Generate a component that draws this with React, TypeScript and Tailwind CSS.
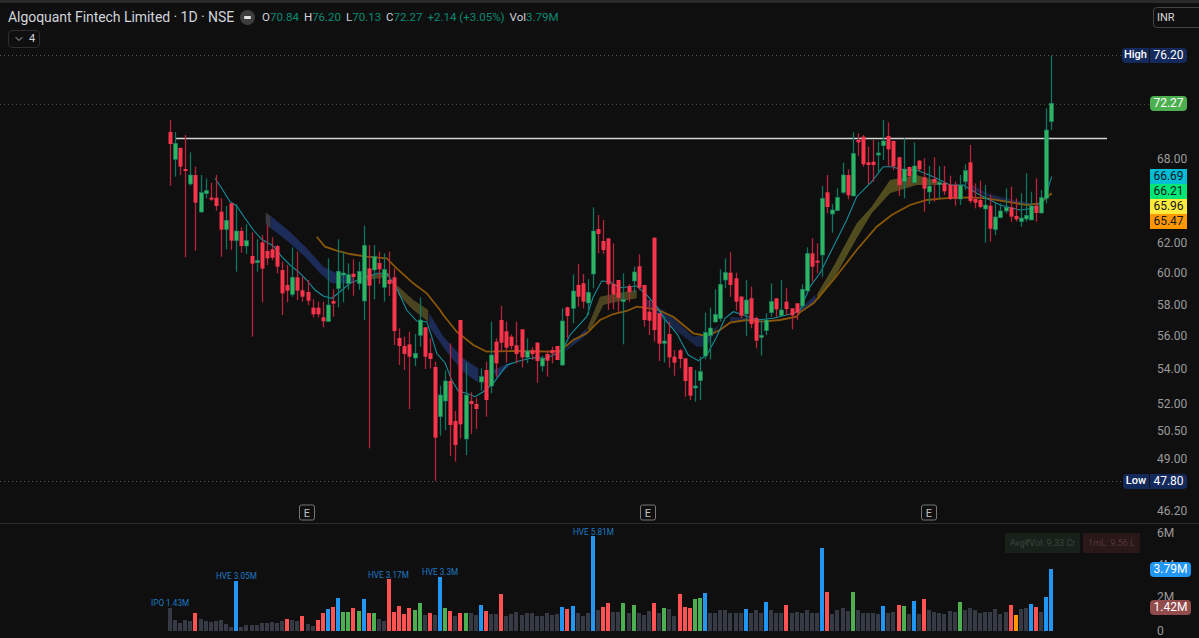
import { ChevronDown } from 'lucide-react';

type Candle = [number, number, number, number, 'r' | 'g'];

// candle rows: wick top, wick bottom, body top, body bottom (read at 3x, y offset per block)
const BLOCK_A: Candle[] = [
  [0, 197, 36, 72, 'r'], [36, 170, 70, 118, 'g'], [82, 165, 84, 140, 'r'], [45, 412, 147, 153, 'r'],
  [97, 197, 165, 192, 'g'], [140, 392, 165, 248, 'r'], [165, 278, 218, 276, 'g'], [175, 235, 212, 221, 'g'],
  [188, 242, 233, 238, 'r'], [165, 272, 233, 258, 'r'], [235, 410, 275, 329, 'r'], [258, 388, 301, 329, 'g'],
  [250, 390, 250, 362, 'r'], [252, 455, 333, 362, 'g'], [322, 398, 333, 378, 'r'], [313, 402, 362, 378, 'g'],
  [337, 650, 408, 431, 'r'], [358, 455, 422, 428, 'g'], [345, 547, 367, 446, 'r'], [316, 435, 393, 415, 'r'],
  [352, 420, 388, 413, 'r'], [375, 460, 378, 440, 'r'], [425, 585, 450, 520, 'r'], [435, 547, 495, 512, 'r'],
  [382, 530, 472, 523, 'g'], [395, 540, 472, 512, 'r'], [470, 545, 511, 530, 'r'], [480, 555, 516, 542, 'r'],
  [538, 593, 563, 583, 'r'], [545, 592, 563, 583, 'r'], [545, 622, 592, 604, 'r'], [415, 605, 555, 605, 'g'],
  [508, 590, 543, 551, 'r'], [358, 562, 454, 506, 'g'], [395, 547, 459, 465, 'g'], [430, 510, 464, 491, 'g'],
  [418, 527, 461, 471, 'r'], [425, 510, 454, 491, 'g'], [317, 600, 376, 543, 'g'],
];

const BLOCK_B: Candle[] = [
  [45, 655, 115, 167, 'r'], [45, 208, 80, 120, 'g'], [65, 162, 99, 118, 'r'], [70, 215, 118, 172, 'g'],
  [65, 198, 150, 162, 'r'], [115, 345, 142, 303, 'r'], [295, 405, 324, 348, 'r'], [320, 420, 348, 372, 'r'],
  [305, 537, 343, 380, 'r'], [312, 408, 370, 384, 'g'], [202, 350, 270, 316, 'g'], [292, 417, 292, 380, 'r'],
  [325, 415, 369, 387, 'r'], [395, 752, 411, 623, 'r'], [467, 617, 495, 560, 'g'], [422, 600, 453, 513, 'g'],
  [340, 678, 453, 585, 'r'], [543, 695, 573, 645, 'r'], [270, 625, 270, 583, 'r'], [398, 675, 495, 627, 'g'],
  [487, 612, 513, 522, 'r'], [503, 597, 522, 537, 'r'], [415, 482, 440, 456, 'g'], [395, 560, 420, 510, 'r'],
  [275, 490, 375, 468, 'g'], [325, 440, 335, 400, 'r'], [228, 365, 270, 338, 'r'], [275, 398, 304, 353, 'r'],
  [313, 358, 320, 348, 'r'], [275, 400, 346, 372, 'r'], [297, 412, 298, 382, 'r'], [325, 400, 363, 382, 'g'],
  [352, 390, 360, 372, 'r'], [337, 458, 338, 393, 'r'], [378, 425, 385, 408, 'g'], [360, 440, 372, 392, 'r'],
  [350, 400, 360, 370, 'r'], [348, 390, 348, 390, 'r'], [235, 408, 273, 405, 'g'],
];

const BLOCK_C: Candle[] = [
  [320, 415, 322, 348, 'r'], [223, 370, 273, 325, 'g'], [192, 320, 255, 290, 'r'], [222, 325, 250, 305, 'r'],
  [238, 345, 277, 309, 'g'], [22, 265, 93, 222, 'g'], [45, 160, 87, 102, 'r'], [60, 162, 123, 150, 'r'],
  [115, 330, 115, 253, 'r'], [130, 328, 252, 283, 'r'], [240, 335, 240, 293, 'r'], [220, 433, 299, 304, 'g'],
  [252, 305, 258, 276, 'r'], [200, 278, 216, 243, 'g'], [163, 270, 199, 263, 'r'], [255, 380, 255, 360, 'r'],
  [300, 405, 335, 362, 'r'], [113, 425, 113, 390, 'r'], [340, 483, 340, 431, 'r'], [350, 488, 423, 430, 'g'],
  [365, 503, 402, 472, 'r'], [450, 527, 470, 488, 'r'], [447, 505, 451, 477, 'r'], [475, 590, 475, 543, 'r'],
  [500, 600, 501, 587, 'r'], [510, 605, 558, 563, 'g'], [470, 600, 515, 542, 'g'], [338, 478, 397, 468, 'g'],
  [323, 478, 384, 406, 'g'], [268, 367, 343, 366, 'g'], [208, 365, 253, 356, 'g'], [175, 265, 218, 240, 'g'],
  [157, 290, 218, 255, 'r'], [218, 332, 235, 305, 'r'], [288, 355, 290, 347, 'r'], [240, 408, 300, 342, 'g'],
  [260, 385, 295, 372, 'r'], [350, 445, 354, 422, 'r'], [360, 467, 406, 411, 'g'], [340, 405, 360, 392, 'g'],
  [250, 350, 305, 338, 'g'], [295, 350, 295, 328, 'r'], [240, 350, 330, 347, 'g'], [265, 345, 305, 327, 'r'],
  [325, 388, 325, 346, 'r'], [310, 360, 310, 338, 'r'], [253, 325, 268, 318, 'g'],
];

const BLOCK_D: Candle[] = [
  [412, 540, 430, 543, 'g'], [385, 515, 430, 470, 'r'], [400, 490, 452, 456, 'r'], [228, 500, 265, 435, 'g'],
  [195, 310, 247, 291, 'r'], [282, 368, 300, 312, 'g'], [235, 302, 262, 302, 'g'], [158, 252, 195, 247, 'g'],
  [178, 268, 195, 256, 'r'], [67, 258, 130, 258, 'g'], [70, 137, 90, 97, 'r'], [75, 170, 80, 163, 'r'],
  [110, 222, 157, 165, 'r'], [90, 215, 155, 165, 'r'], [95, 187, 129, 131, 'g'], [30, 150, 93, 107, 'g'],
  [37, 170, 78, 118, 'r'], [92, 180, 93, 169, 'r'], [140, 258, 142, 225, 'r'], [85, 265, 177, 215, 'g'],
  [170, 225, 171, 198, 'r'], [97, 220, 168, 218, 'g'], [150, 185, 152, 178, 'r'], [145, 305, 202, 236, 'r'],
  [168, 282, 228, 246, 'g'], [142, 275, 207, 218, 'r'], [168, 265, 218, 222, 'g'], [168, 255, 219, 244, 'r'],
  [197, 270, 224, 267, 'r'], [215, 287, 225, 265, 'r'], [195, 285, 226, 267, 'g'], [163, 240, 182, 215, 'g'],
  [105, 280, 157, 273, 'r'], [220, 295, 267, 278, 'r'], [212, 295, 270, 291, 'r'], [225, 398, 285, 297, 'g'],
  [255, 395, 287, 356, 'r'], [280, 375, 321, 359, 'g'], [280, 325, 303, 323, 'g'], [235, 310, 292, 303, 'g'],
  [230, 335, 292, 320, 'r'], [265, 335, 318, 328, 'r'], [250, 350, 324, 335, 'g'], [190, 335, 316, 327, 'g'],
  [245, 330, 288, 330, 'g'], [205, 335, 287, 309, 'r'], [240, 310, 263, 309, 'g'],
];

const BLOCK_E: Candle[] = [
  [325, 610, 390, 595, 'g'], [167, 390, 310, 365, 'g'],
];

const toY = (rows: Candle[], top: number): Candle[] =>
  rows.map(([a, b, c, d, s]) => [top + a / 3, top + b / 3, top + c / 3, top + d / 3, s]);

const CANDLES = [
  ...toY(BLOCK_A, 120),
  ...toY(BLOCK_B, 230),
  ...toY(BLOCK_C, 200),
  ...toY(BLOCK_D, 110),
  ...toY(BLOCK_E, 0),
];

const barX = (i: number) => Math.round(170 + i * 5.095);

const pts = (ox: number, oy: number, list: number[][]) =>
  list.map(([x, y]) => `${(ox + x / 3).toFixed(1)},${(oy + y / 3).toFixed(1)}`).join(' ');

const CYAN = [
  pts(150, 120, [[195,175],[215,205],[240,245],[260,258],[285,295],[310,330],[335,358],[370,378],[395,410],[420,435],[445,455],[470,480],[495,510],[520,528],[545,535],[570,515],[600,490],[625,480],[650,470],[680,460],[710,460],[740,505],[770,570],[800,603],[830,605],[845,650]]),
  pts(350, 230, [[260,370],[285,398],[305,450],[325,483],[350,490],[375,500],[400,485],[430,460],[470,405],[510,392],[550,383],[590,385],[637,362]]),
  pts(560, 200, [[10,445],[30,405],[80,350],[100,290],[125,243],[150,245],[180,263],[230,258],[260,285],[290,320],[320,365],[350,400],[385,465],[415,482],[440,465],[470,410],[495,355],[520,335],[550,345],[590,360],[640,355],[700,340]]),
  pts(800, 110, [[0,600],[30,530],[60,490],[100,410],[140,330],[170,260],[215,215],[250,170],[275,170],[310,180],[350,180],[400,200],[450,225],[490,225],[530,250],[570,270],[600,285],[660,300],[700,295],[735,265],[755,200]]),
].join(' ');

const ORANGE = [
  pts(150, 120, [[500,350],[525,380],[560,392],[600,402],[650,410],[710,415],[740,445],[790,490],[830,520],[870,570]]),
  pts(350, 230, [[280,255],[320,305],[370,345],[410,365],[500,363],[600,365],[637,362]]),
  pts(560, 200, [[10,445],[40,420],[80,400],[120,360],[160,342],[200,333],[230,320],[290,328],[340,350],[400,400],[440,408],[480,390],[510,368],[560,360],[600,365],[660,360],[710,350]]),
  pts(800, 110, [[0,607],[40,580],[100,510],[170,420],[230,350],[275,315],[330,285],[380,270],[430,265],[510,262],[560,265],[620,275],[680,285],[720,280],[755,250]]),
].join(' ');

const RIBBONS = [
  { fill: '#3a3a40', p: pts(150, 120, [[347,278],[362,288],[362,325],[347,312]]) },
  { fill: '#1c2b57', p: pts(150, 120, [[362,288],[420,335],[470,385],[520,440],[560,460],[610,470],[610,490],[545,490],[510,460],[465,410],[415,365],[362,325]]) },
  { fill: '#4a4520', p: pts(150, 120, [[650,465],[720,458],[720,470],[650,480]]) },
  { fill: '#4a4520', p: pts(350, 230, [[140,165],[190,210],[235,240],[235,275],[190,240],[145,195]]) },
  { fill: '#1c2b57', p: pts(350, 230, [[238,250],[280,320],[340,385],[385,415],[385,458],[340,425],[290,365],[238,290]]) },
  { fill: '#1c2b57', p: pts(350, 230, [[430,420],[490,395],[440,445]]) },
  { fill: '#1c2b57', p: pts(350, 230, [[640,365],[710,295],[710,315],[650,360]]) },
  { fill: '#4a4520', p: pts(350, 230, [[712,295],[750,200],[800,190],[860,180],[860,205],[800,215],[760,225],[720,305]]) },
  { fill: '#1a2648', p: pts(560, 200, [[250,290],[330,345],[400,410],[450,400],[480,370],[440,440],[410,440],[340,385],[250,310]]) },
  { fill: '#1a2648', p: pts(560, 200, [[510,350],[600,358],[600,364],[510,365]]) },
  { fill: '#1c2b57', p: pts(560, 200, [[720,330],[765,285],[770,305],[720,340]]) },
  { fill: '#504c1e', p: pts(800, 110, [[50,555],[100,470],[170,340],[215,290],[270,210],[350,195],[420,215],[430,225],[350,225],[270,250],[215,310],[170,385],[100,510],[55,570]]) },
  { fill: '#1a2648', p: pts(800, 110, [[490,210],[560,250],[640,270],[700,280],[700,285],[600,275],[520,240]]) },
];

const COLORS: Record<string, string> = {
  x: '#363a45',
  r: '#ff5252',
  g: '#4caf50',
  b: '#2196f3',
  o: '#ff9800',
};

// volume bar tops (y at 3x from 525), then colour key
const VOLUME: [number, string][] = [
  [248,'x'],[284,'x'],[294,'x'],[284,'x'],[288,'x'],[265,'r'],[281,'x'],[288,'x'],[292,'x'],[288,'x'],[286,'x'],[297,'x'],[305,'x'],[168,'b'],[305,'x'],[300,'x'],[300,'x'],[300,'x'],[294,'x'],[294,'x'],
  [291,'x'],[294,'x'],[287,'x'],[281,'r'],[284,'x'],[288,'x'],[273,'r'],[297,'x'],[303,'x'],[284,'r'],[265,'r'],[252,'b'],[247,'r'],[218,'b'],[260,'g'],[262,'g'],[250,'r'],[257,'g'],[223,'b'],[265,'r'],
  [265,'g'],[282,'x'],[288,'x'],[162,'r'],[262,'r'],[244,'r'],[267,'r'],[250,'r'],[254,'g'],[234,'g'],[270,'x'],[265,'r'],[270,'x'],[156,'b'],[250,'g'],[257,'r'],[273,'x'],[265,'r'],[265,'g'],[265,'x'],
  [270,'x'],[240,'b'],[258,'r'],[267,'x'],[267,'x'],[207,'r'],[273,'x'],[267,'x'],[260,'x'],[270,'x'],[263,'x'],[263,'x'],[273,'x'],[273,'x'],[265,'x'],[270,'x'],[267,'x'],[247,'b'],[252,'r'],[244,'b'],
  [263,'x'],[273,'x'],[263,'x'],[33,'b'],[255,'x'],[247,'r'],[234,'r'],[261,'x'],[261,'x'],[234,'g'],[265,'x'],[241,'g'],[265,'x'],[270,'x'],[258,'x'],[234,'r'],[265,'x'],[250,'g'],[252,'x'],[273,'x'],
  [207,'r'],[247,'r'],[250,'r'],[223,'g'],[220,'g'],[203,'b'],[265,'x'],[265,'x'],[255,'x'],[255,'x'],[263,'x'],[265,'x'],[265,'x'],[252,'b'],[265,'x'],[255,'x'],[265,'x'],[232,'b'],[255,'x'],[263,'x'],
  [265,'x'],[240,'r'],[265,'x'],[260,'x'],[265,'x'],[255,'x'],[265,'x'],[265,'x'],[70,'b'],[200,'r'],[267,'x'],[255,'x'],[250,'x'],[258,'x'],[200,'g'],[255,'x'],[265,'x'],[265,'x'],[265,'x'],[267,'x'],
  [242,'b'],[265,'x'],[261,'x'],[240,'r'],[244,'g'],[267,'x'],[229,'b'],[267,'x'],[221,'r'],[255,'x'],[260,'x'],[265,'x'],[267,'x'],[258,'x'],[260,'x'],[232,'g'],[255,'x'],[250,'x'],[255,'x'],[265,'x'],
  [262,'x'],[262,'x'],[252,'x'],[267,'x'],[261,'x'],[240,'r'],[270,'o'],[252,'x'],[250,'x'],[238,'b'],[247,'r'],[261,'x'],[216,'b'],[132,'b'],
];

const PRICE_LABELS = [
  { y: 159, t: '68.00' }, { y: 243, t: '62.00' }, { y: 273, t: '60.00' }, { y: 305, t: '58.00' },
  { y: 336, t: '56.00' }, { y: 369, t: '54.00' }, { y: 404, t: '52.00' }, { y: 431, t: '50.50' },
  { y: 459, t: '49.00' }, { y: 511, t: '46.20' },
];

const EMA_TAGS = [
  { y: 169, t: '66.69', c: 'bg-[#00bcd4]' },
  { y: 184, t: '66.21', c: 'bg-[#00e676]' },
  { y: 199, t: '65.96', c: 'bg-[#ffeb3b]' },
  { y: 214, t: '65.47', c: 'bg-[#ff9800]' },
];

const VOLUME_NOTES = [
  { x: 151, y: 606, t: 'IPO 1.43M' },
  { x: 216, y: 579, t: 'HVE 3.05M' },
  { x: 368, y: 578, t: 'HVE 3.17M' },
  { x: 422, y: 575, t: 'HVE 3.3M' },
  { x: 573, y: 535, t: 'HVE 5.81M' },
];

const OHLC = [
  ['O', '70.84'],
  ['H', '76.20'],
  ['L', '70.13'],
  ['C', '72.27'],
];

function PriceChart() {
  return (
    <svg className="absolute inset-0 w-[1150px] h-[520px]" viewBox="0 3 1150 520">
      <line x1="0" x2="1122" y1="55.5" y2="55.5" stroke="#5a5a5a" strokeDasharray="1 3" />
      <line x1="0" x2="1150" y1="104.5" y2="104.5" stroke="#3e5a3e" strokeDasharray="1 3" />
      <line x1="0" x2="1122" y1="481.5" y2="481.5" stroke="#5a5a5a" strokeDasharray="1 3" />

      {RIBBONS.map((r, i) => (
        <polygon key={i} points={r.p} fill={r.fill} />
      ))}
      <polyline points={ORANGE} fill="none" stroke="#8a5608" strokeWidth="1.8" />
      <polyline points={CYAN} fill="none" stroke="#148f9e" strokeWidth="1.1" />
      <line x1="175" x2="1107" y1="138.5" y2="138.5" stroke="#d4d4d4" strokeWidth="1.4" />

      {CANDLES.map(([wickTop, wickBot, top, bot, side], i) => {
        const x = barX(i);
        const up = side === 'g';
        return (
          <g key={i}>
            <rect x={x - 0.15} y={wickTop} width="1.3" height={wickBot - wickTop} fill={up ? '#0d7560' : '#b8243c'} />
            <rect
              x={x - 1.5}
              y={top}
              width="4"
              height={Math.max(bot - top, 2)}
              fill={up ? '#2fb460' : '#fa344b'}
              stroke={up ? '#12806a' : 'none'}
              strokeWidth="0.6"
            />
          </g>
        );
      })}

      {[307, 648, 929].map((x) => (
        <g key={x}>
          <rect x={x - 7.5} y="505" width="15" height="15" rx="2" fill="#0f0f0f" stroke="#777777" />
          <text x={x} y="516.5" textAnchor="middle" fontSize="11" fill="#c0c0c0">
            E
          </text>
        </g>
      ))}
    </svg>
  );
}

function VolumeChart() {
  return (
    <svg className="absolute inset-0 w-[1150px] h-[114px]" viewBox="0 524 1150 114">
      <g shapeRendering="crispEdges">
        {VOLUME.map(([top, key], i) => {
          const y = 525 + top / 3;
          return <rect key={i} x={barX(i) - 2} y={y} width="4" height={631 - y} fill={COLORS[key]} />;
        })}
      </g>
      {VOLUME_NOTES.map((n) => (
        <text key={n.t} x={n.x} y={n.y} fontSize="8.2" fill="#1e7ac4">
          {n.t}
        </text>
      ))}
    </svg>
  );
}

export default function App() {
  return (
    <div className="w-[1199px] h-[638px] flex flex-col overflow-hidden bg-[#0f0f0f] font-['Roboto',sans-serif] text-[#d1d4dc]">
      <div className="h-[3px] bg-[#2a2a2a]" />

      {/* Price pane */}
      <div className="h-[520px] flex">
        <div className="relative w-[1150px]">
          <PriceChart />

          {/* Legend */}
          <div className="absolute left-2 top-[6px] flex flex-col items-start gap-[5px]">
            <div className="flex items-center h-4">
              <span className="text-[14px] leading-4 tracking-[-0.05px]">Algoquant Fintech Limited · 1D · NSE</span>
              <span className="ml-[6px] flex items-center justify-center w-[15px] h-[15px] rounded-full bg-[#3d3d3d]">
                <span className="w-[7px] h-[3px] rounded-[1px] bg-[#e0e0e0]" />
              </span>
              <div className="ml-[7px] flex items-center gap-[5px] text-[11.5px] leading-4">
                {OHLC.map(([k, v]) => (
                  <span key={k}>
                    {k}
                    <span className="text-[#0b8a73]">{v}</span>
                  </span>
                ))}
                <span className="text-[#0b8a73]">+2.14 (+3.05%)</span>
                <span>
                  Vol<span className="text-[#0b8a73]">3.79M</span>
                </span>
              </div>
            </div>
            <div className="flex items-center gap-1 h-[18px] px-1 rounded-sm border border-[#2e2e2e] text-[11px]">
              <ChevronDown size={12} strokeWidth={2} className="text-[#b8b8b8]" />
              4
            </div>
          </div>

          <div className="absolute left-[1122px] top-[45px] w-[27px] h-[15px] flex items-center justify-center rounded-l-sm bg-[#14295c] text-[11px] font-medium text-white">
            High
          </div>
          <div className="absolute left-[1123px] top-[471px] w-[26px] h-[15px] flex items-center justify-center rounded-l-sm bg-[#14295c] text-[11px] font-medium text-white">
            Low
          </div>
        </div>

        {/* Price axis */}
        <div className="relative w-[49px] text-[12px] leading-[15px]">
          <div className="absolute left-[3px] top-[4px] w-[60px] h-[21px] flex items-center pl-[3px] rounded border border-[#444] text-[11px] text-[#d8d8d8]">
            INR
          </div>
          <div className="absolute left-0 top-[45px] w-[37px] h-[15px] flex items-center justify-center rounded-r-sm bg-[#14295c] text-white">
            76.20
          </div>
          <div className="absolute left-0 top-[93px] w-[37px] h-[15px] flex items-center justify-center rounded-sm bg-[#4caf50] text-white">
            72.27
          </div>
          <div className="absolute left-0 top-[471px] w-[37px] h-[15px] flex items-center justify-center rounded-r-sm bg-[#14295c] text-white">
            47.80
          </div>
          {PRICE_LABELS.map((l) => (
            <span key={l.t} className="absolute left-[7px] text-[#9b9b9b]" style={{ top: l.y - 10 }}>
              {l.t}
            </span>
          ))}
          {EMA_TAGS.map((l) => (
            <span
              key={l.t}
              className={`absolute left-0 w-[37px] h-[15px] flex items-center justify-center text-[#131722] ${l.c}`}
              style={{ top: l.y - 3 }}
            >
              {l.t}
            </span>
          ))}
        </div>
      </div>

      <div className="h-px bg-[#2a2a2a]" />

      {/* Volume pane */}
      <div className="h-[114px] flex">
        <div className="relative w-[1150px]">
          <VolumeChart />
          <div className="absolute left-[1005px] top-[9px] flex gap-[3px] text-[9px] leading-5">
            <span className="w-[75px] text-center bg-[#172019] text-[#3b463c]">Avg₹Vol: 9.33 Cr</span>
            <span className="w-[57px] text-center bg-[#2a1718] text-[#533737]">1mL: 9.56 L</span>
          </div>
        </div>
        <div className="relative w-[49px] text-[12px] leading-[15px]">
          <span className="absolute left-[7px] top-[2px] text-[#9b9b9b]">6M</span>
          <span className="absolute left-[7px] top-[34px] text-[#9b9b9b]">4M</span>
          <span className="absolute left-[7px] top-[66px] text-[#9b9b9b]">2M</span>
          <span className="absolute left-[7px] top-[100px] text-[#9b9b9b]">0</span>
          <span className="absolute left-0 top-[38px] w-[41px] h-[15px] flex items-center justify-center rounded-sm bg-[#2196f3] text-white">
            3.79M
          </span>
          <span className="absolute left-0 top-[76px] w-[41px] h-[15px] flex items-center justify-center rounded-sm bg-[#924c4b] text-white">
            1.42M
          </span>
        </div>
      </div>
    </div>
  );
}
